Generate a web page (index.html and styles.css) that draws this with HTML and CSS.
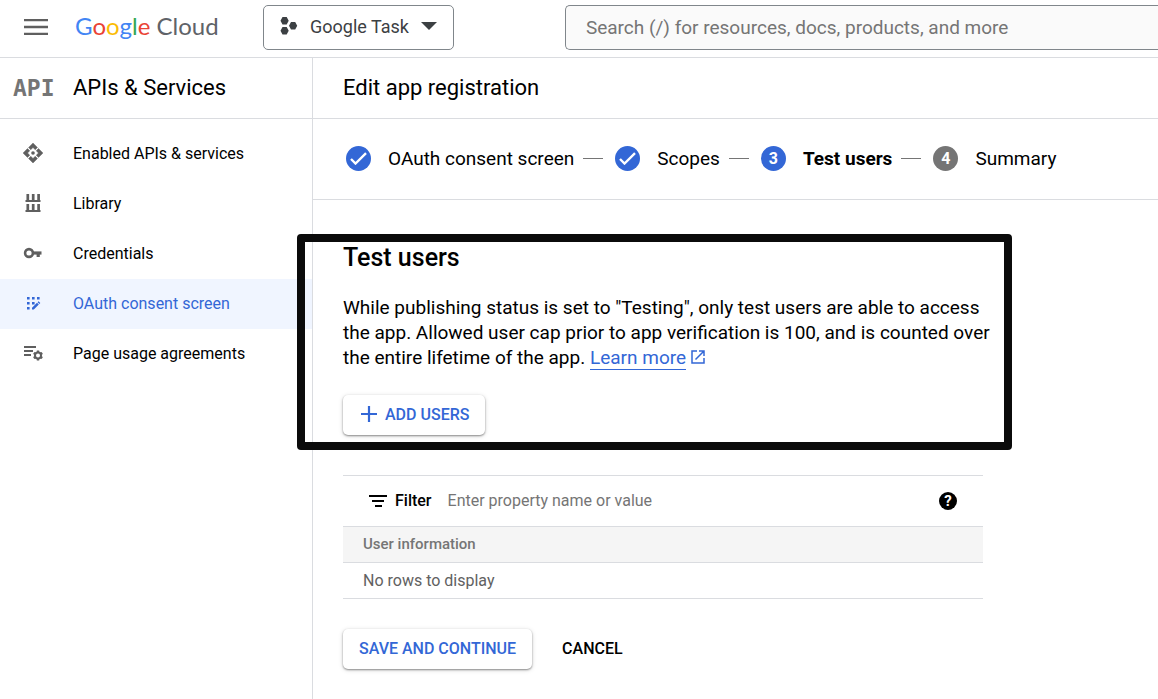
FILE: index.html
```html
<!DOCTYPE html>
<html lang="en">
<head>
<meta charset="utf-8">
<title>Edit app registration – APIs &amp; Services – Google Cloud</title>
<link rel="stylesheet" href="styles.css">
</head>
<body>
<header class="topbar">
  <button class="menu-button" type="button" aria-label="Main menu">
    <svg width="24" height="16" viewBox="0 0 24 16"><path d="M0 1h24M0 8h24M0 15h24" stroke="#5f5f5f" stroke-width="2.400"/></svg>
  </button>
  <a class="brand" href="#"><span class="brand-google"><span class="blue">G</span><span class="red">o</span><span class="yellow">o</span><span class="blue">g</span><span class="green">l</span><span class="red">e</span></span> Cloud</a>
  <button class="project-picker" type="button">
    <svg width="18" height="20" viewBox="0 0 18 20" fill="#3c4043"><path d="M2.500 1h4.200l2 3.700-2 3.700H2.500l-2-3.700zM11 6h4.200l2 3.700-2 3.700H11L9 9.700zM2.500 11h4.200l2 3.700-2 3.700H2.500l-2-3.700z"/></svg>
    <span>Google Task</span>
    <svg width="16" height="8" viewBox="0 0 16 8" fill="#3c4043"><path d="M0 0h16L8 8z"/></svg>
  </button>
  <input class="search" type="text" aria-label="Search" placeholder="Search (/) for resources, docs, products, and more">
</header>
<div class="layout">
  <aside class="sidebar">
    <div class="section-title"><span class="api-mark">API</span><span>APIs &amp; Services</span></div>
    <nav class="nav">
      <a class="nav-item" href="#">
        <svg width="20" height="20" viewBox="0 0 20 20" fill="#5f5f5f"><path d="M10 0l4.500 4.500-2.300 2.300L10 4.600 7.800 6.800 5.500 4.500zM10 20l-4.500-4.500 2.300-2.300 2.200 2.200 2.200-2.200 2.300 2.300zM0 10l4.500-4.500 2.300 2.300L4.600 10l2.200 2.200-2.300 2.300zM20 10l-4.500 4.500-2.300-2.300 2.200-2.200-2.200-2.200 2.300-2.300z" stroke="#5f5f5f" stroke-width=".4"/><circle cx="10" cy="10" r="1.800"/></svg>
        Enabled APIs &amp; services</a>
      <a class="nav-item" href="#">
        <svg width="20" height="20" viewBox="0 0 20 20" fill="none" stroke="#5f5f5f"><path d="M4.800 1v7M10.200 1v7M15.600 1v7M4.800 11v7M10.200 11v7M15.600 11v7" stroke-width="2.700"/><path d="M2.500 8h15M2.500 18h15" stroke-width="1.800"/></svg>
        Library</a>
      <a class="nav-item" href="#">
        <svg width="20" height="20" viewBox="0 0 20 20" fill="none" stroke="#5f5f5f"><circle cx="6" cy="10" r="3.900" stroke-width="2.600"/><path d="M10 10h8.500" stroke-width="3.200"/><path d="M15.200 10v4" stroke-width="3.200"/></svg>
        Credentials</a>
      <a class="nav-item active" href="#" aria-current="page">
        <svg width="20" height="20" viewBox="0 0 20 20" fill="#3367d6"><path d="M4 4h2.600v2.600H4zM9 4h2.600v2.600H9zM14 4h2.600v2.600H14zM4 9h2.600v2.600H4zM9 9h2.600v2.600H9zM4 14h2.600v2.600H4zM9 14.800l5-5 1.800 1.800-5 5H9zM14.600 9.200l.9-.9 1.800 1.800-.9.900z"/></svg>
        OAuth consent screen</a>
      <a class="nav-item" href="#">
        <svg width="20" height="20" viewBox="0 0 20 20" fill="none" stroke="#5f5f5f"><path d="M1 4h12M1 8h9M1 12h7" stroke-width="1.800"/><circle cx="15" cy="12.500" r="3" stroke-width="2"/><path d="M15 7.500v2M15 15.500v2M10.700 10l1.700 1M17.600 14l1.700 1M10.700 15l1.700-1M17.600 11l1.700-1" stroke-width="2.400"/></svg>
        Page usage agreements</a>
    </nav>
  </aside>
  <main class="main">
    <h1 class="page-title">Edit app registration</h1>
    <ol class="stepper">
      <li class="step"><span class="badge"><svg width="17" height="13" viewBox="0 0 17 13"><path d="M1 7l4.500 4.500L16 1.200" fill="none" stroke="#fff" stroke-width="2.400"/></svg></span>OAuth consent screen</li>
      <li class="step"><span class="badge"><svg width="17" height="13" viewBox="0 0 17 13"><path d="M1 7l4.500 4.500L16 1.200" fill="none" stroke="#fff" stroke-width="2.400"/></svg></span>Scopes</li>
      <li class="step current" aria-current="step"><span class="badge">3</span>Test users</li>
      <li class="step"><span class="badge pending">4</span>Summary</li>
    </ol>
    <div class="content">
      <section class="test-users">
        <h2>Test users</h2>
        <p>While publishing status is set to "Testing", only test users are able to access the app. Allowed user cap prior to app verification is 100, and is counted over the entire lifetime of the app. <a class="learn-more" href="#">Learn more</a><svg class="external" width="14" height="14" viewBox="0 0 14 14" fill="none" stroke="#3367d6" stroke-width="1.500"><path d="M6 1H1v12h12V8M8 1h5v5M13 1L4.500 9.500"/></svg></p>
        <button class="button raised add" type="button"><svg width="16" height="16" viewBox="0 0 16 16"><path d="M8 0v16M0 8h16" stroke="#3367d6" stroke-width="2.200"/></svg>ADD USERS</button>
      </section>
      <div class="filter-bar">
        <svg width="18" height="14" viewBox="0 0 18 14"><path d="M0 2h18M3 7h12M6 12h7" stroke="#000" stroke-width="2.200"/></svg>
        <label for="filter">Filter</label>
        <input id="filter" type="text" placeholder="Enter property name or value">
        <button class="help" type="button" aria-label="Help">?</button>
      </div>
      <table class="users">
        <thead><tr><th>User information</th></tr></thead>
        <tbody><tr><td>No rows to display</td></tr></tbody>
      </table>
      <div class="actions">
        <button class="button raised" type="button">SAVE AND CONTINUE</button>
        <button class="button" type="button">CANCEL</button>
      </div>
    </div>
  </main>
</div>
</body>
</html>
```

FILE: styles.css
```css
* { box-sizing: border-box; }
body {
  margin: 0;
  min-height: 100vh;
  display: flex;
  flex-direction: column;
  font-family: Roboto, "Liberation Sans", sans-serif;
  font-size: 16px;
  color: #000;
  background: #fff;
}
button, input { font: inherit; }
button { border: 0; padding: 0; background: none; cursor: pointer; }
a { color: inherit; text-decoration: none; }
svg { flex: none; }

.topbar {
  display: flex;
  align-items: center;
  height: 58px;
  padding: 0 0 3px 24px;
  border-bottom: 1px solid #dadce0;
}
.menu-button { display: flex; width: 24px; margin-right: 27px; }
.brand { width: 188px; padding-bottom: 3px; font-family: Lato, sans-serif; font-size: 24px; color: #5f6368; white-space: nowrap; }
.blue { color: #4285f4; }
.red { color: #ea4335; }
.yellow { color: #fbbc04; }
.green { color: #34a853; }
.project-picker {
  display: flex;
  align-items: center;
  gap: 12px;
  height: 45px;
  padding: 0 16px 2px;
  border: 1px solid #80868b;
  border-radius: 5px;
  font-size: 18px;
  color: #3c4043;
  white-space: nowrap;
}
.search {
  flex: 1;
  min-width: 0;
  height: 45px;
  margin-left: 111px;
  padding: 0 20px;
  border: 1px solid #80868b;
  border-right: 0;
  border-radius: 5px 0 0 5px;
  font-size: 19px;
  background: #fafafa;
}
.search::placeholder { color: #757575; }

.layout { display: flex; flex: 1; }
.sidebar { flex: none; width: 313px; border-right: 1px solid #dadce0; }
.section-title, .page-title {
  display: flex;
  align-items: center;
  height: 61px;
  margin: 0;
  padding-bottom: 1px;
  border-bottom: 1px solid #dadce0;
  font-size: 22px;
  font-weight: 400;
}
.api-mark {
  width: 60px;
  margin-left: 13px;
  font-family: "DejaVu Sans Mono", monospace;
  font-size: 23px;
  font-weight: 700;
  color: #757575;
}
.nav { padding-top: 10px; }
.nav-item { display: flex; align-items: center; gap: 30px; height: 50px; padding: 0 0 2px 23px; }
.nav-item.active { background: #f0f5ff; color: #3367d6; }

.main { flex: 1; min-width: 0; }
.page-title { padding-left: 30px; }
.stepper {
  display: flex;
  align-items: center;
  height: 81px;
  margin: 0;
  padding: 0 30px 2px 33px;
  border-bottom: 1px solid #dadce0;
  list-style: none;
  font-size: 19px;
  white-space: nowrap;
}
.step { display: flex; align-items: center; }
.step + .step::before { content: ""; width: 20px; height: 1px; margin: 0 12px 0 9px; background: #757575; }
.current { font-weight: 700; }
.badge {
  display: flex;
  align-items: center;
  justify-content: center;
  width: 25px;
  height: 25px;
  margin-right: 17px;
  border-radius: 50%;
  font-size: 16px;
  font-weight: 700;
  color: #fff;
  background: #3367d6;
}
.pending { background: #757575; }

.content { max-width: 670px; padding: 43px 0 30px 30px; }
.test-users { position: relative; }
.test-users::after {
  content: "";
  position: absolute;
  inset: -9px -29px -15px -46px;
  border: 8px solid #0b0b0b;
  border-radius: 4px;
  pointer-events: none;
}
.test-users h2 { margin: 0 0 22px; font-size: 25px; line-height: 30px; font-weight: 500; }
.test-users p { margin: 0 -15px 25px 0; font-size: 19px; line-height: 25px; }
.learn-more { display: inline-block; border-bottom: 1px solid #3367d6; line-height: 22px; color: #3367d6; }
.external { margin-left: 5px; }
.button { display: flex; align-items: center; gap: 8px; height: 40px; padding-bottom: 2px; font-weight: 500; white-space: nowrap; }
.raised {
  padding: 0 16px 2px;
  border-radius: 5px;
  color: #3367d6;
  background: #fff;
  box-shadow: 0 1px 2px rgba(0, 0, 0, .4), 0 1px 5px rgba(0, 0, 0, .15);
}
.add { padding-left: 18px; }

.filter-bar {
  display: flex;
  align-items: center;
  height: 52px;
  margin-top: 40px;
  padding: 0 26px;
  border-top: 1px solid #dadce0;
  border-bottom: 1px solid #dadce0;
}
.filter-bar label { margin: 0 16px 0 8px; padding-bottom: 2px; font-weight: 500; }
.filter-bar input { flex: 1; min-width: 0; border: 0; padding: 0 0 2px; outline: 0; }
.filter-bar input::placeholder { color: #757575; }
.help { width: 18px; height: 18px; border-radius: 50%; background: #000; color: #fff; font-size: 15px; line-height: 18px; font-weight: 700; }
.users { width: 100%; border-collapse: separate; border-spacing: 0; }
.users th, .users td { height: 36px; padding: 0 20px; border-bottom: 1px solid #dadce0; text-align: left; }
.users th { padding-bottom: 2px; font-size: 15px; font-weight: 500; color: #757575; background: #f5f5f5; }
.users td { color: #616161; }
.actions { display: flex; gap: 30px; margin-top: 30px; }
```
